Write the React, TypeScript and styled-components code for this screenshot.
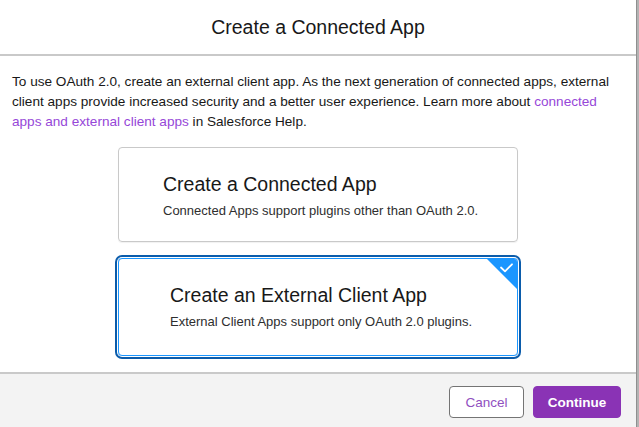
import styled, { createGlobalStyle } from "styled-components";

const GlobalStyle = createGlobalStyle`
  html, body {
    margin: 0;
    padding: 0;
    background: #b3b3b3;
  }
  body {
    font-family: "Liberation Sans", Arial, sans-serif;
    color: #181818;
  }
`;

const Page = styled.div`
  display: flex;
  width: 639px;
  height: 427px;
  overflow: hidden;
`;

const Modal = styled.div`
  width: 636px;
  display: flex;
  flex-direction: column;
  background: #fff;
  border-right: 1px solid #8f8f8f;
`;

const Header = styled.div`
  padding: 15px 16px;
  border-bottom: 2px solid #c9c9c9;
  text-align: center;
`;

const Title = styled.h2`
  margin: 0;
  font-size: 19.5px;
  line-height: 24px;
  font-weight: 400;
  color: #181818;
`;

const Body = styled.div`
  padding: 16px 12px 16px;
  display: flex;
  flex-direction: column;
  align-items: center;
`;

const Intro = styled.p`
  margin: 0 0 15px;
  align-self: stretch;
  font-size: 13.6px;
  line-height: 20px;
  color: #181818;
`;

const Link = styled.a`
  color: #9647d8;
  text-decoration: none;
  cursor: pointer;
`;

const Tile = styled.div<{ $selected?: boolean; $inset: number }>`
  position: relative;
  width: 400px;
  box-sizing: border-box;
  padding: 24px 16px ${(p) => (p.$selected ? "24px" : "21px")} ${(p) => p.$inset}px;
  border-radius: 4px;
  border: 1px solid ${(p) => (p.$selected ? "#1b96ff" : "#c9c9c9")};
  box-shadow: ${(p) =>
    p.$selected ? "0 0 0 1px #fff, 0 0 0 3px #0b5cab" : "0 1px 1px rgba(0,0,0,0.06)"};
  margin-top: ${(p) => (p.$selected ? "16px" : "0")};
  overflow: hidden;
  cursor: pointer;
`;

const TileTitle = styled.div`
  font-size: 19.5px;
  line-height: 24px;
  color: #181818;
`;

const TileText = styled.div`
  margin-top: 6px;
  font-size: 13px;
  line-height: 18px;
  color: #2e2e2e;
`;

const Corner = styled.div`
  position: absolute;
  top: 0;
  right: 0;
  width: 30px;
  height: 30px;
`;

const Footer = styled.div`
  flex: 1;
  display: flex;
  justify-content: flex-end;
  align-items: flex-start;
  gap: 9px;
  padding: 12px 15px 0 16px;
  background: #f3f3f3;
  border-top: 2px solid #c9c9c9;
`;

const Button = styled.button<{ $brand?: boolean }>`
  width: ${(p) => (p.$brand ? "88px" : "75px")};
  height: 32px;
  padding: 0;
  border-radius: 4px;
  font-family: "Liberation Sans", Arial, sans-serif;
  font-size: 13.5px;
  font-weight: ${(p) => (p.$brand ? 700 : 400)};
  border: 1px solid ${(p) => (p.$brand ? "#8a33b5" : "#747474")};
  background: ${(p) => (p.$brand ? "#8a33b5" : "#fff")};
  color: ${(p) => (p.$brand ? "#fff" : "#9050c0")};
  cursor: pointer;
`;

const Edge = styled.div`
  flex: 1;
  background: #b3b3b3;
`;

export default function App() {
  return (
    <Page>
      <GlobalStyle />
      <Modal>
        <Header>
          <Title>Create a Connected App</Title>
        </Header>
        <Body>
          <Intro>
            To use OAuth 2.0, create an external client app. As the next generation of
            connected apps, external client apps provide increased security and a better
            user experience. Learn more about{" "}
            <Link>connected apps and external client apps</Link> in Salesforce Help.
          </Intro>
          <Tile $inset={44}>
            <TileTitle>Create a Connected App</TileTitle>
            <TileText>Connected Apps support plugins other than OAuth 2.0.</TileText>
          </Tile>
          <Tile $selected $inset={51}>
            <TileTitle>Create an External Client App</TileTitle>
            <TileText>External Client Apps support only OAuth 2.0 plugins.</TileText>
            <Corner>
              <svg width="30" height="30" viewBox="0 0 30 30">
                <path d="M0 0H30V30Z" fill="#1b96ff" />
                <path
                  d="M14 8.5l4 3.8 7-7"
                  fill="none"
                  stroke="#fff"
                  strokeWidth="1.8"
                  strokeLinecap="round"
                  strokeLinejoin="round"
                />
              </svg>
            </Corner>
          </Tile>
        </Body>
        <Footer>
          <Button>Cancel</Button>
          <Button $brand>Continue</Button>
        </Footer>
      </Modal>
      <Edge />
    </Page>
  );
}
